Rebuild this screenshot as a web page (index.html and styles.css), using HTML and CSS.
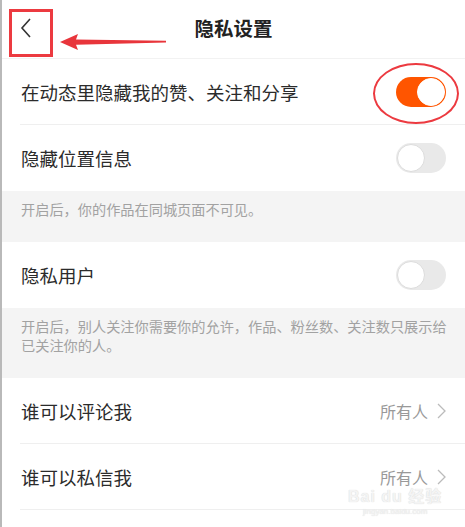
FILE: index.html
```html
<!DOCTYPE html>
<html lang="zh-CN">
<head>
    <meta charset="UTF-8">
    <meta name="viewport" content="width=device-width, initial-scale=1.0">
    <title>隐私设置</title>
    <link rel="stylesheet" href="styles.css">
</head>
<body>
    <div class="page">
        <header class="topbar">
            <button class="back-button">
                <svg width="14" height="22" viewBox="0 0 14 22">
                    <polyline points="11,2 3,11 11,20" fill="none" stroke="#333" stroke-width="1.6"/>
                </svg>
            </button>
            <h1>隐私设置</h1>
            <span></span>
        </header>

        <div class="row">
            <span class="label">在动态里隐藏我的赞、关注和分享</span>
            <span class="switch on"></span>
        </div>
        <div class="row plain">
            <span class="label">隐藏位置信息</span>
            <span class="switch"></span>
        </div>
        <p class="note">开启后，你的作品在同城页面不可见。</p>

        <div class="row plain">
            <span class="label">隐私用户</span>
            <span class="switch"></span>
        </div>
        <p class="note">开启后，别人关注你需要你的允许，作品、粉丝数、关注数只展示给已关注你的人。</p>

        <div class="row">
            <span class="label">谁可以评论我</span>
            <span class="value">所有人
                <svg width="9" height="16" viewBox="0 0 9 16">
                    <polyline points="1,1 8,8 1,15" fill="none" stroke="#bbb" stroke-width="1.3"/>
                </svg>
            </span>
        </div>
        <div class="row">
            <span class="label">谁可以私信我</span>
            <span class="value">所有人
                <svg width="9" height="16" viewBox="0 0 9 16">
                    <polyline points="1,1 8,8 1,15" fill="none" stroke="#bbb" stroke-width="1.3"/>
                </svg>
            </span>
        </div>

        <!-- annotations drawn over the screenshot -->
        <div class="mark-box"></div>
        <svg class="mark-arrow" width="110" height="20" viewBox="0 0 110 20">
            <polygon points="0,10 18,2 16,7.5 106,8.8 106,10.6 16,12.8 18,18" fill="#e8353b"/>
        </svg>
        <div class="mark-ellipse"></div>

        <div class="watermark">
            <div class="wm-big">Bai du 经验</div>
            <div class="wm-small">jingyan.baidu.com</div>
        </div>
    </div>
</body>
</html>
```

FILE: styles.css
```css
body {
    margin: 0;
    padding: 0;
    background-color: #fff;
    font-family: "Noto Sans CJK SC", "Noto Sans", sans-serif;
    color: #2b2b2b;
}

.page {
    position: relative;
    width: 463px;
    height: 527px;
    border-left: 2px solid #b9b9b9;
    overflow: hidden;
}

.topbar {
    height: 58px;
    display: grid;
    grid-template-columns: 1fr auto 1fr;
    align-items: center;
    border-bottom: 1px solid #f2f2f2;
}

.back-button {
    justify-self: start;
    margin-left: 17px;
    margin-top: -2px;
    padding: 0;
    border: none;
    background: none;
    display: flex;
}

.topbar h1 {
    margin: -3px 0 0 0;
    font-size: 19.5px;
    font-weight: bold;
    color: #222;
}

.row {
    height: 65px;
    margin-left: 18px;
    padding-right: 19px;
    display: flex;
    align-items: center;
    justify-content: space-between;
    border-bottom: 1px solid #efefef;
}

.row.plain {
    height: 66px;
    border-bottom: none;
}

.label {
    font-size: 18.5px;
    padding-left: 1px;
}

.value {
    display: flex;
    align-items: center;
    gap: 9px;
    font-size: 16px;
    color: #999;
}

.switch {
    position: relative;
    width: 50px;
    height: 30px;
    border-radius: 15px;
    background-color: #e9e9e9;
    box-sizing: border-box;
}

.switch::after {
    content: "";
    position: absolute;
    top: 1px;
    left: 1px;
    width: 28px;
    height: 28px;
    border-radius: 50%;
    background-color: #fff;
    box-sizing: border-box;
    border: 1px solid #dcdcdc;
}

.switch.on {
    background-color: #ff5500;
}

.switch.on::after {
    left: 21px;
    border-color: #fff;
}

.note {
    margin: 0;
    padding: 9px 10px 23px 19px;
    background-color: #f4f4f4;
    font-size: 14.2px;
    line-height: 19px;
    color: #a2a2a2;
}

.mark-box {
    position: absolute;
    left: 7px;
    top: 9px;
    width: 38px;
    height: 42px;
    border: 3px solid #ec3a40;
}

.mark-arrow {
    position: absolute;
    left: 58px;
    top: 32px;
}

.mark-ellipse {
    position: absolute;
    left: 371px;
    top: 63px;
    width: 82px;
    height: 57px;
    border: 2px solid #ec3a40;
    border-radius: 50%;
}

.watermark {
    position: absolute;
    left: 346px;
    top: 488px;
    color: #f4f4f4;
    text-align: center;
    font-family: "Liberation Sans", "Noto Sans CJK SC", sans-serif;
    text-shadow: 0 0 1px #cfcfcf;
}

.wm-big {
    font-size: 16px;
    font-weight: bold;
    line-height: 17px;
    letter-spacing: 1px;
}

.wm-small {
    font-size: 8px;
    line-height: 10px;
    margin-top: 2px;
}
```
